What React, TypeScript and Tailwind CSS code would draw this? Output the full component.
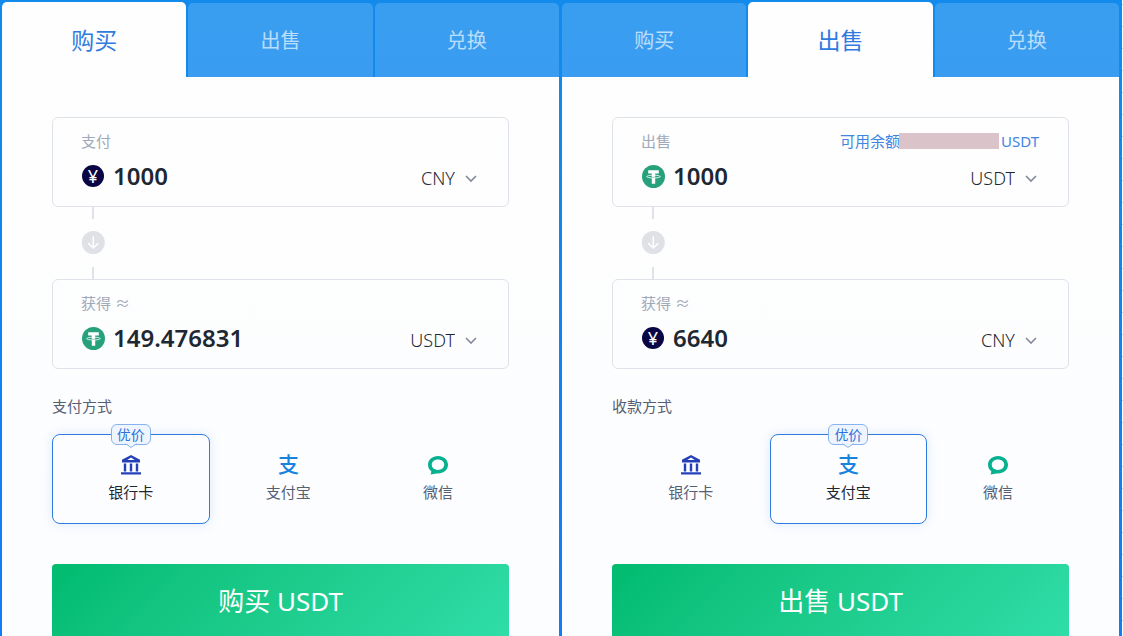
import { useState } from 'react';
import clsx from 'clsx';

type Currency = 'CNY' | 'USDT';

interface PanelData {
  id: string;
  activeTab: string;
  fromLabel: string;
  fromCurrency: Currency;
  fromAmount: string;
  toCurrency: Currency;
  toAmount: string;
  showBalance?: boolean;
  methodLabel: string;
  method: string;
  submit: string;
}

const TABS = ['购买', '出售', '兑换'];

const METHODS = [
  { id: 'bank', name: '银行卡', icon: <BankIcon /> },
  { id: 'alipay', name: '支付宝', icon: <AlipayIcon /> },
  { id: 'wechat', name: '微信', icon: <WechatIcon /> },
];

const PANELS: PanelData[] = [
  {
    id: 'buy',
    activeTab: '购买',
    fromLabel: '支付',
    fromCurrency: 'CNY',
    fromAmount: '1000',
    toCurrency: 'USDT',
    toAmount: '149.476831',
    methodLabel: '支付方式',
    method: 'bank',
    submit: '购买 USDT',
  },
  {
    id: 'sell',
    activeTab: '出售',
    fromLabel: '出售',
    fromCurrency: 'USDT',
    fromAmount: '1000',
    toCurrency: 'CNY',
    toAmount: '6640',
    showBalance: true,
    methodLabel: '收款方式',
    method: 'alipay',
    submit: '出售 USDT',
  },
];

function BankIcon() {
  return (
    <svg viewBox="0 0 20 20" className="h-5 w-5" fill="#2440b8" aria-hidden="true">
      <path
        fillRule="evenodd"
        d="M10 0 19 4.8V7.4H1V4.8ZM10 2.6 6.2 5H13.8Z"
      />
      <path d="M2.8 8.6H5.2V16.6H2.8ZM8.8 8.6H11.2V16.6H8.8ZM14.8 8.6H17.2V16.6H14.8ZM0 17.2H20V19.4H0Z" />
    </svg>
  );
}

function AlipayIcon() {
  return (
    <span className="text-[21px] leading-[18px] font-medium text-[#1683dc]" aria-hidden="true">
      支
    </span>
  );
}

function WechatIcon() {
  return (
    <svg viewBox="0 0 20 20" className="h-5 w-5" fill="#07b08f" aria-hidden="true">
      <path
        fillRule="evenodd"
        d="M10 1C15.6 1 20 4.8 20 9.8S15.6 18.4 10 18.4C9 18.4 8 18.5 7 18.8L2.6 19.6 3.4 16.4C1.2 14.8 0 12.4 0 9.8 0 4.8 4.4 1 10 1ZM10 4.6C6.4 4.6 3.8 6.8 3.8 9.8S6.4 15 10 15 16.2 12.8 16.2 9.8 13.6 4.6 10 4.6Z"
      />
    </svg>
  );
}

function CurrencyIcon({ currency }: { currency: Currency }) {
  if (currency === 'CNY') {
    return (
      <span
        className="mr-px flex h-[22px] w-[22px] shrink-0 items-center justify-center rounded-full bg-[#0a0645] text-lg leading-none text-white"
        aria-hidden="true"
      >
        ¥
      </span>
    );
  }
  return (
    <svg viewBox="0 0 23 23" className="h-[23px] w-[23px] shrink-0" aria-hidden="true">
      <circle cx="11.5" cy="11.5" r="11.5" fill="#27a17c" />
      <ellipse cx="11.5" cy="11.6" rx="6.8" ry="1.4" fill="none" stroke="#fff" strokeWidth="0.8" />
      <path d="M6.2 5.2H16.8V8.4H13.2V18.8H9.8V8.4H6.2Z" fill="#fff" />
      <path d="M9.8 12.2Q11.5 12.6 13.2 12.2" fill="none" stroke="#27a17c" strokeWidth="0.5" />
    </svg>
  );
}

function Chevron() {
  return (
    <svg viewBox="0 0 16 16" className="h-4 w-4 shrink-0" fill="none" aria-hidden="true">
      <path d="M3 6 8 11 13 6" stroke="#868c9b" strokeWidth="1.7" />
    </svg>
  );
}

interface AmountCardProps {
  id: string;
  label: string;
  currency: Currency;
  amount: string;
  showBalance?: boolean;
}

function AmountCard({ id, label, currency, amount, showBalance }: AmountCardProps) {
  const [value, setValue] = useState(amount);
  const [selected, setSelected] = useState(currency);

  return (
    <div className="h-[90px] rounded-md border border-[#dfe2e8] pt-3 pr-[29px] pl-7">
      <div className="flex items-center justify-between text-[15px] leading-[22px]">
        <label htmlFor={`${id}-amount`} className="text-[#a0a9ba]">
          {label}
        </label>
        {showBalance && (
          <div className="flex items-center text-[#3f85e4]">
            <span>可用余额</span>
            <span className="-ml-px mr-[2px] h-4 w-[100px] bg-[#dac3c9]" />
            <span>USDT</span>
          </div>
        )}
      </div>
      <div className="mt-[6px] flex h-9 items-center pl-px">
        <CurrencyIcon currency={selected} />
        <input
          id={`${id}-amount`}
          value={value}
          onChange={(e) => setValue(e.target.value)}
          className="ml-2 w-0 flex-1 bg-transparent text-2xl font-semibold text-[#1e2832] outline-none"
        />
        <div className="flex items-center pt-1">
          <select
            aria-label={`${label} 币种`}
            value={selected}
            onChange={(e) => setSelected(e.target.value as Currency)}
            className="mr-2 appearance-none bg-transparent text-lg leading-6 font-light text-[#1e2832] outline-none [field-sizing:content]"
          >
            <option>CNY</option>
            <option>USDT</option>
          </select>
          <Chevron />
        </div>
      </div>
    </div>
  );
}

function Connector() {
  return (
    <div className="ml-[29px] flex h-[72px] w-6 flex-col items-center justify-between">
      <span className="h-3 w-[2px] bg-[#dfe2e8]" />
      <svg viewBox="0 0 24 24" className="h-6 w-6" fill="none" aria-hidden="true">
        <circle cx="12.3" cy="11.5" r="11.5" fill="#dfe1e7" />
        <path d="M12.3 5.4V17M7.3 12.2 12.3 17 17.3 12.2" stroke="#fff" strokeWidth="1.5" />
      </svg>
      <span className="h-3 w-[2px] bg-[#dfe2e8]" />
    </div>
  );
}

function BestPriceBadge() {
  return (
    <span className="absolute -top-[11px] left-1/2 flex h-[21px] w-10 -translate-x-1/2 items-center justify-center rounded-md border border-[#86b2f0] bg-[#eff5fe] text-sm leading-none font-normal text-[#2b72dc]">
      优价
      <svg viewBox="0 0 12 5" className="absolute top-[18px] h-[5px] w-3" aria-hidden="true">
        <path d="M0 0.5H1L6 4.3 11 0.5H12V0H0Z" fill="#eff5fe" />
        <path d="M0.5 0.8 6 4.4 11.5 0.8" fill="none" stroke="#86b2f0" />
      </svg>
    </span>
  );
}

function TradePanel({ data }: { data: PanelData }) {
  const [tab, setTab] = useState(data.activeTab);
  const [method, setMethod] = useState(data.method);

  return (
    <section className="flex flex-col">
      {/* Tabs */}
      <div role="tablist" className="grid h-[75px] grid-cols-3 items-end gap-[2px]">
        {TABS.map((name) => (
          <button
            key={name}
            type="button"
            role="tab"
            aria-selected={tab === name}
            onClick={() => setTab(name)}
            className={clsx(
              'rounded-t-[5px] pt-[2px]',
              tab === name
                ? 'h-[75px] bg-[#fefefe] text-[23px] text-[#2f7be0]'
                : 'h-[74px] bg-white/[0.17] text-xl text-white/65'
            )}
          >
            {name}
          </button>
        ))}
      </div>

      {/* Form */}
      <form
        className="flex-1 bg-linear-to-b from-[#fefefe] to-[#fcfdff] px-[50px] pt-10"
        onSubmit={(e) => e.preventDefault()}
      >
        <AmountCard
          id={`${data.id}-from`}
          label={data.fromLabel}
          currency={data.fromCurrency}
          amount={data.fromAmount}
          showBalance={data.showBalance}
        />
        <Connector />
        <AmountCard
          id={`${data.id}-to`}
          label="获得 ≈"
          currency={data.toCurrency}
          amount={data.toAmount}
        />

        <fieldset className="mt-[25px]">
          <legend className="text-[15px] leading-6 text-[#566074]">
            {data.methodLabel}
          </legend>
          <div className="mt-4 grid grid-cols-[10fr_10fr_9fr]">
            {METHODS.map((m) => (
              <label
                key={m.id}
                className={clsx(
                  'relative flex h-[90px] cursor-pointer flex-col items-center rounded-lg border pt-5 text-[15px]',
                  method === m.id
                    ? 'border-[#2f7be0] text-[#1e2832] shadow-[0_0_12px_rgba(47,123,224,0.16)]'
                    : 'border-transparent text-[#566074]'
                )}
              >
                <input
                  type="radio"
                  name={`${data.id}-method`}
                  checked={method === m.id}
                  onChange={() => setMethod(m.id)}
                  className="sr-only"
                />
                {method === m.id && <BestPriceBadge />}
                <span className="flex h-5 items-start">{m.icon}</span>
                <span className="mt-[5px] leading-6">{m.name}</span>
              </label>
            ))}
          </div>
        </fieldset>

        <button
          type="submit"
          className="mt-10 h-[76px] w-full rounded bg-linear-135 from-[#00bb70] to-[#2fdda8] pb-[2px] text-[26px] text-white"
        >
          {data.submit}
        </button>
      </form>
    </section>
  );
}

export default function App() {
  return (
    <div className="flex h-screen overflow-hidden font-['Noto_Sans','Noto_Sans_CJK_SC',sans-serif]">
      <main className="grid flex-1 grid-cols-2 gap-[3px] bg-linear-to-b from-[#128bed] to-[#127cf4] pt-[2px] pr-[3px] pl-[2px]">
        {PANELS.map((panel) => (
          <TradePanel key={panel.id} data={panel} />
        ))}
      </main>
      <div className="w-px bg-[repeating-linear-gradient(#fff_0_4px,#c9ced3_4px_5px,#fff_5px_22px)]" />
    </div>
  );
}
